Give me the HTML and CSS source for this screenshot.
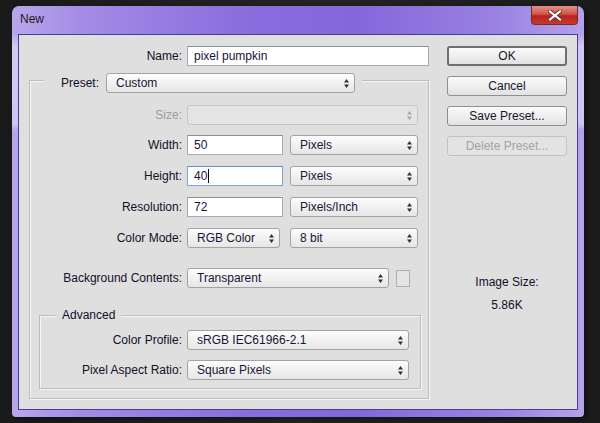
FILE: index.html
```html
<!DOCTYPE html>
<html>
<head>
<meta charset="utf-8">
<link rel="stylesheet" href="styles.css">
</head>
<body>
<div class="window">
  <div class="titlebar">
    <span class="title">New</span>
    <div class="close">
      <svg width="14" height="11" viewBox="0 0 14 11"><path d="M2 1.5 L12 9.5 M12 1.5 L2 9.5" stroke="#5a3030" stroke-width="4" stroke-linecap="square"/><path d="M2 1.5 L12 9.5 M12 1.5 L2 9.5" stroke="#fff" stroke-width="2.2" stroke-linecap="square"/></svg>
    </div>
  </div>
  <div class="content">
    <div class="left">
      <div class="row name-row">
        <span class="lbl">Name:</span>
        <div class="input w-name">pixel pumpkin</div>
      </div>
      <div class="group">
        <div class="legend preset-legend">
          <span class="lbl preset-lbl">Preset:</span>
          <div class="sel w-preset"><span>Custom</span><svg class="arr" width="5" height="9" viewBox="0 0 5 9"><path d="M0 3.5 L2.5 0 L5 3.5Z M0 5.5 L2.5 9 L5 5.5Z" fill="#333"/></svg></div>
        </div>
        <div class="row g-row r-size">
          <span class="lbl dis">Size:</span>
          <div class="sel disabled w-full"><span></span><svg class="arr" width="5" height="9" viewBox="0 0 5 9"><path d="M0 3.5 L2.5 0 L5 3.5Z M0 5.5 L2.5 9 L5 5.5Z" fill="#a8a8a8"/></svg></div>
        </div>
        <div class="row g-row r-width">
          <span class="lbl">Width:</span>
          <div class="pair">
            <div class="input w-num">50</div>
            <div class="sel w-unit"><span>Pixels</span><svg class="arr" width="5" height="9" viewBox="0 0 5 9"><path d="M0 3.5 L2.5 0 L5 3.5Z M0 5.5 L2.5 9 L5 5.5Z" fill="#333"/></svg></div>
          </div>
        </div>
        <div class="row g-row">
          <span class="lbl">Height:</span>
          <div class="pair">
            <div class="input w-num focus">40<span class="caret"></span></div>
            <div class="sel w-unit"><span>Pixels</span><svg class="arr" width="5" height="9" viewBox="0 0 5 9"><path d="M0 3.5 L2.5 0 L5 3.5Z M0 5.5 L2.5 9 L5 5.5Z" fill="#333"/></svg></div>
          </div>
        </div>
        <div class="row g-row">
          <span class="lbl">Resolution:</span>
          <div class="pair">
            <div class="input w-num">72</div>
            <div class="sel w-unit"><span>Pixels/Inch</span><svg class="arr" width="5" height="9" viewBox="0 0 5 9"><path d="M0 3.5 L2.5 0 L5 3.5Z M0 5.5 L2.5 9 L5 5.5Z" fill="#333"/></svg></div>
          </div>
        </div>
        <div class="row g-row">
          <span class="lbl">Color Mode:</span>
          <div class="pair">
            <div class="sel w-mode"><span>RGB Color</span><svg class="arr" width="5" height="9" viewBox="0 0 5 9"><path d="M0 3.5 L2.5 0 L5 3.5Z M0 5.5 L2.5 9 L5 5.5Z" fill="#333"/></svg></div>
            <div class="sel w-unit"><span>8 bit</span><svg class="arr" width="5" height="9" viewBox="0 0 5 9"><path d="M0 3.5 L2.5 0 L5 3.5Z M0 5.5 L2.5 9 L5 5.5Z" fill="#333"/></svg></div>
          </div>
        </div>
        <div class="row g-row r-bg">
          <span class="lbl">Background Contents:</span>
          <div class="pair">
            <div class="sel w-bg"><span>Transparent</span><svg class="arr" width="5" height="9" viewBox="0 0 5 9"><path d="M0 3.5 L2.5 0 L5 3.5Z M0 5.5 L2.5 9 L5 5.5Z" fill="#333"/></svg></div>
            <div class="swatch"></div>
          </div>
        </div>
        <div class="group adv">
          <div class="legend adv-legend">Advanced</div>
          <div class="row a-row r-profile">
            <span class="lbl">Color Profile:</span>
            <div class="sel w-adv"><span>sRGB IEC61966-2.1</span><svg class="arr" width="5" height="9" viewBox="0 0 5 9"><path d="M0 3.5 L2.5 0 L5 3.5Z M0 5.5 L2.5 9 L5 5.5Z" fill="#333"/></svg></div>
          </div>
          <div class="row a-row r-pixel">
            <span class="lbl">Pixel Aspect Ratio:</span>
            <div class="sel w-adv"><span>Square Pixels</span><svg class="arr" width="5" height="9" viewBox="0 0 5 9"><path d="M0 3.5 L2.5 0 L5 3.5Z M0 5.5 L2.5 9 L5 5.5Z" fill="#333"/></svg></div>
          </div>
        </div>
      </div>
    </div>
    <div class="right">
      <div class="btn default">OK</div>
      <div class="btn">Cancel</div>
      <div class="btn">Save Preset...</div>
      <div class="btn disabled-btn">Delete Preset...</div>
      <div class="size-label">Image Size:</div>
      <div class="size-value">5.86K</div>
    </div>
  </div>
</div>
</body>
</html>
```

FILE: styles.css
```css
html, body {
  margin: 0;
  padding: 0;
}
body {
  width: 600px;
  height: 423px;
  overflow: hidden;
  background: linear-gradient(90deg, #1a1a1a 0%, #242424 50%, #1c1c1c 100%);
  font-family: "Liberation Sans", Arial, sans-serif;
  font-size: 12px;
  color: #10102a;
}
.window {
  margin: 6px 0 0 12px;
  width: 572px;
  height: 411px;
  box-sizing: border-box;
  padding: 0 6px 7px;
  border-radius: 7px 7px 4px 4px;
  background:
    linear-gradient(180deg, rgba(255,255,255,0.0) 0px, rgba(255,255,255,0.0) 28px, rgba(230,224,250,0.6) 40px, rgba(230,224,250,0.55) 118px, rgba(255,255,255,0) 124px),
    linear-gradient(90deg, #b8a7ec 0%, #a48ce6 12%, #8a6ede 40%, #8467db 60%, #9a82e2 85%, #b4a2ea 100%);
  box-shadow: 3px 2px 6px rgba(0,0,0,0.5);
}
.titlebar {
  height: 28px;
  display: flex;
  justify-content: space-between;
  align-items: flex-start;
}
.title {
  margin: 6px 0 0 2px;
  line-height: 15px;
  font-size: 12px;
  color: #1a1a1a;
}
.close {
  width: 47px;
  height: 19px;
  box-sizing: border-box;
  border: 1px solid #7a2a2a;
  border-top: none;
  border-radius: 0 0 4px 4px;
  background: linear-gradient(180deg, #e39087 0%, #d2554b 45%, #b8231d 55%, #c63a30 100%);
  display: flex;
  align-items: center;
  justify-content: center;
}
.content {
  height: 376px;
  box-sizing: border-box;
  border: 1px solid #4a3c94;
  background: #dfdfdf;
  display: flex;
}
.left {
  width: 410px;
  padding-top: 11px;
  display: flex;
  flex-direction: column;
}
.row {
  display: grid;
  align-items: center;
  column-gap: 5px;
}
.lbl {
  text-align: right;
  line-height: 20px;
  white-space: nowrap;
}
.lbl.dis {
  color: #9c9c9c;
}
.name-row {
  grid-template-columns: 163px 242px;
}
.input {
  height: 20px;
  box-sizing: border-box;
  background: #fff;
  border: 1px solid #a9abb2;
  border-top-color: #8e9096;
  padding-left: 6px;
  line-height: 18px;
  color: #16163a;
  display: flex;
  align-items: center;
}
.input.focus {
  border-color: #7aa7d9;
  border-top-color: #5d8fcb;
}
.caret {
  display: inline-block;
  width: 1px;
  height: 14px;
  background: #000;
  margin-left: 1px;
}
.w-name { width: 242px; }
.group {
  margin: 14px 0 0 10px;
  width: 400px;
  height: 319px;
  box-sizing: border-box;
  border: 1px solid #bcbcbc;
  box-shadow: inset 1px 1px 0 #f6f6f6, 1px 1px 0 #f6f6f6;
  display: flex;
  flex-direction: column;
}
.legend {
  background: #dfdfdf;
  align-self: flex-start;
}
.preset-legend {
  margin: -8px 0 0 14px;
  padding: 0 7px 0 17px;
  display: flex;
  align-items: center;
  gap: 5px;
}
.preset-lbl {
  width: 40px;
  text-align: left;
}
.sel {
  height: 20px;
  box-sizing: border-box;
  border: 1px solid #a3a3a3;
  border-radius: 3px;
  background: linear-gradient(180deg, #fdfdfd 0%, #f1f1f1 50%, #e6e6e6 100%);
  display: flex;
  align-items: center;
  justify-content: space-between;
  padding: 0 5px 0 9px;
  color: #16163a;
  line-height: 18px;
  white-space: nowrap;
}
.sel.disabled {
  background: #e4e4e4;
  border-color: #c6c6c6;
}
.arr { flex: none; }
.w-preset { width: 249px; }
.w-full { width: 231px; }
.w-num { width: 96px; }
.w-unit { width: 128px; }
.w-mode { width: 93px; }
.w-bg { width: 202px; }
.w-adv { width: 222px; }
.g-row {
  grid-template-columns: 152px 231px;
  margin-top: 11px;
}
.r-size { margin-top: 12px; }
.r-width { margin-top: 10px; }
.r-bg { margin-top: 20px; }
.pair {
  display: flex;
  justify-content: space-between;
  align-items: center;
}
.swatch {
  width: 14px;
  height: 17px;
  box-sizing: border-box;
  border: 1px solid #b0b0b0;
  background: #e4e4e4;
  margin-right: 8px;
}
.adv {
  margin: 27px 0 0 9px;
  width: 382px;
  height: 74px;
}
.adv-legend {
  margin: -8px 0 0 16px;
  padding: 0 6px;
  line-height: 14px;
}
.a-row {
  grid-template-columns: 142px 222px;
}
.r-profile { margin-top: 8px; }
.r-pixel { margin-top: 10px; }
.right {
  padding: 11px 0 0 18px;
  width: 120px;
  display: flex;
  flex-direction: column;
}
.btn {
  height: 20px;
  box-sizing: border-box;
  border: 1px solid #8f8f8f;
  border-radius: 3px;
  background: linear-gradient(180deg, #fafafa 0%, #efefef 50%, #e2e2e2 100%);
  text-align: center;
  line-height: 18px;
  color: #14142a;
  margin-bottom: 10px;
}
.btn.default {
  border: 2px solid #6f6f6f;
  line-height: 16px;
}
.btn.disabled-btn {
  color: #a3a3a3;
  border-color: #c2c2c2;
  background: #e3e3e3;
}
.size-label {
  margin-top: 109px;
  text-align: center;
  line-height: 15px;
}
.size-value {
  margin-top: 8px;
  text-align: center;
  line-height: 15px;
}
```
